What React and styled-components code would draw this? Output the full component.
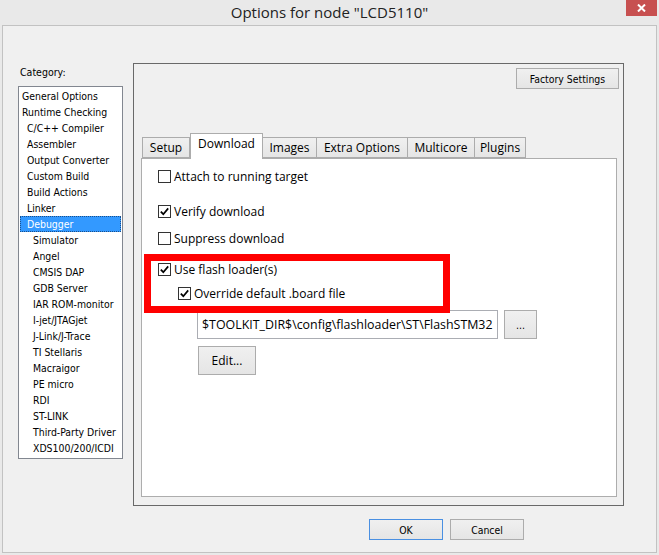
import React from 'react';
import styled, { createGlobalStyle } from 'styled-components';

const dlgFont = `'DejaVu Sans Condensed', 'DejaVu Sans', sans-serif`;
const uiFont = `'Open Sans', 'Noto Sans', sans-serif`;

const GlobalStyle = createGlobalStyle`
  html, body {
    margin: 0;
    padding: 0;
    background: #e9e9e9;
  }
  * {
    box-sizing: border-box;
  }
`;

const Window = styled.div`
  width: 659px;
  height: 555px;
  display: flex;
  flex-direction: column;
  padding: 0 2px 2px 2px;
  background: #e9e9e9;
`;

const TitleBar = styled.div`
  height: 25px;
  display: grid;
  grid-template-columns: 1fr auto 1fr;
  align-items: start;
`;

const Title = styled.div`
  grid-column: 2;
  font-family: ${uiFont};
  font-size: 15px;
  line-height: 24px;
  color: #222;
`;

const CloseButton = styled.div`
  grid-column: 3;
  justify-self: end;
  width: 31px;
  height: 16px;
  background: #c75050;
  display: flex;
  align-items: center;
  justify-content: center;
`;

const Client = styled.div`
  flex: 1;
  display: flex;
  flex-direction: column;
  border: 1px solid #c2c2c2;
  background: #f0f0f0;
  padding: 37px 0 0 15px;
`;

const MainRow = styled.div`
  display: flex;
  align-items: flex-start;
  gap: 10px;
`;

const LeftCol = styled.div`
  width: 105px;
  padding-top: 1px;
`;

const CategoryLabel = styled.div`
  font-family: ${dlgFont};
  font-size: 10.5px;
  line-height: 16px;
  margin: 0 0 6px 2px;
  color: #000;
`;

const ListBox = styled.div`
  width: 105px;
  background: #fff;
  border: 1px solid #828790;
  padding: 1px 1px 2px 1px;
`;

const ListItem = styled.div`
  height: 16px;
  line-height: 16px;
  font-family: ${dlgFont};
  font-size: 10.4px;
  white-space: nowrap;
  padding-left: ${(p) => [2, 7, 13][p.level]}px;
  color: ${(p) => (p.selected ? '#fff' : '#000')};
  background: ${(p) => (p.selected ? '#3399ff' : 'transparent')};
  outline: ${(p) => (p.selected ? '1px dotted #1c4f8a' : 'none')};
  outline-offset: -1px;
`;

const Frame = styled.div`
  width: 491px;
  height: 443px;
  border: 1px solid #696969;
  display: flex;
  flex-direction: column;
  padding: 4px 4px 8px 0;
`;

const Button = styled.div`
  width: ${(p) => p.w}px;
  height: ${(p) => p.h || 21}px;
  border: 1px solid ${(p) => (p.primary ? '#4a90e2' : '#acacac')};
  background: linear-gradient(#f0f0f0, #e5e5e5);
  display: flex;
  align-items: center;
  justify-content: center;
  font-family: ${(p) => (p.ui ? uiFont : dlgFont)};
  font-size: ${(p) => (p.ui ? '12px' : '10.4px')};
  color: #000;
`;

const TopRight = styled.div`
  display: flex;
  justify-content: flex-end;
`;

const TabStrip = styled.div`
  display: flex;
  align-items: flex-end;
  height: 25px;
  margin: 44px 0 0 8px;
`;

const Tab = styled.div`
  position: relative;
  width: ${(p) => p.w}px;
  height: ${(p) => (p.active ? 26 : 21)}px;
  margin-bottom: ${(p) => (p.active ? -1 : 0)}px;
  z-index: ${(p) => (p.active ? 1 : 0)};
  border: 1px solid #acacac;
  border-bottom: ${(p) => (p.active ? 'none' : '1px solid #acacac')};
  border-left-width: ${(p) => (p.first || p.active ? 1 : 0)}px;
  background: ${(p) => (p.active ? '#fff' : 'linear-gradient(#f0f0f0, #e5e5e5)')};
  display: flex;
  align-items: center;
  justify-content: center;
  padding-bottom: ${(p) => (p.active ? 6 : 0)}px;
  font-family: ${uiFont};
  font-size: 12px;
  color: #000;
`;

const Panel = styled.div`
  position: relative;
  flex: 1;
  margin-left: 7px;
  margin-right: 2px;
  background: #fff;
  border: 1px solid #adadad;
  padding: 9px 0 0 16px;
  display: flex;
  flex-direction: column;
`;

const CheckRow = styled.label`
  display: flex;
  align-items: center;
  gap: 3px;
  height: 16px;
  margin-top: ${(p) => p.top}px;
  margin-left: ${(p) => p.indent || 0}px;
  font-family: ${uiFont};
  font-size: 12px;
  color: #000;
`;

const Box = styled.span`
  width: 13px;
  height: 13px;
  border: 1px solid #333;
  background: #fff;
  display: flex;
  align-items: center;
  justify-content: center;
`;

const PathRow = styled.div`
  display: flex;
  gap: 6px;
  margin: 9px 0 0 39px;
`;

const PathField = styled.div`
  width: 301px;
  height: 29px;
  border: 1px solid #abadb3;
  background: #fff;
  padding-left: 4px;
  font-family: ${uiFont};
  font-size: 12.4px;
  line-height: 27px;
  white-space: nowrap;
  overflow: hidden;
  color: #000;
`;

const EditRow = styled.div`
  margin: 7px 0 0 40px;
`;

// red highlight drawn over the flash loader options
const Highlight = styled.div`
  position: absolute;
  left: 2px;
  top: 95px;
  width: 306px;
  height: 59px;
  border: 7px solid #ff0000;
  pointer-events: none;
`;

const ButtonRow = styled.div`
  display: flex;
  gap: 7px;
  margin: 13px 0 0 351px;
`;

const categories = [
  ['General Options', 0],
  ['Runtime Checking', 0],
  ['C/C++ Compiler', 1],
  ['Assembler', 1],
  ['Output Converter', 1],
  ['Custom Build', 1],
  ['Build Actions', 1],
  ['Linker', 1],
  ['Debugger', 1],
  ['Simulator', 2],
  ['Angel', 2],
  ['CMSIS DAP', 2],
  ['GDB Server', 2],
  ['IAR ROM-monitor', 2],
  ['I-jet/JTAGjet', 2],
  ['J-Link/J-Trace', 2],
  ['TI Stellaris', 2],
  ['Macraigor', 2],
  ['PE micro', 2],
  ['RDI', 2],
  ['ST-LINK', 2],
  ['Third-Party Driver', 2],
  ['XDS100/200/ICDI', 2],
];

const tabs = [
  ['Setup', 48],
  ['Download', 73],
  ['Images', 54],
  ['Extra Options', 91],
  ['Multicore', 67],
  ['Plugins', 51],
];

function Check({ checked }) {
  return (
    <Box>
      {checked && (
        <svg width="11" height="11" viewBox="0 0 11 11">
          <polyline points="1.8,5.6 4.3,8.2 9.2,2.4" fill="none" stroke="#000" strokeWidth="1.7" />
        </svg>
      )}
    </Box>
  );
}

function Option({ label, checked, top, indent }) {
  return (
    <CheckRow top={top} indent={indent}>
      <Check checked={checked} />
      {label}
    </CheckRow>
  );
}

export default function App() {
  return (
    <>
      <GlobalStyle />
      <Window>
        <TitleBar>
          <Title>Options for node "LCD5110"</Title>
          <CloseButton>
            <svg width="9" height="8" viewBox="0 0 9 8">
              <path d="M1 0.5 L8 7.5 M8 0.5 L1 7.5" stroke="#fff" strokeWidth="2" />
            </svg>
          </CloseButton>
        </TitleBar>
        <Client>
          <MainRow>
            <LeftCol>
              <CategoryLabel>Category:</CategoryLabel>
              <ListBox>
                {categories.map(([name, level]) => (
                  <ListItem key={name} level={level} selected={name === 'Debugger'}>
                    {name}
                  </ListItem>
                ))}
              </ListBox>
            </LeftCol>
            <Frame>
              <TopRight>
                <Button w={103}>Factory Settings</Button>
              </TopRight>
              <TabStrip>
                {tabs.map(([name, w], i) => (
                  <Tab key={name} w={w} first={i === 0} active={name === 'Download'}>
                    {name}
                  </Tab>
                ))}
              </TabStrip>
              <Panel>
                <Option label="Attach to running target" top={0} />
                <Option label="Verify download" checked top={19} />
                <Option label="Suppress download" top={11} />
                <Option label="Use flash loader(s)" checked top={15} />
                <Option label="Override default .board file" checked top={8} indent={20} />
                <PathRow>
                  <PathField>$TOOLKIT_DIR$\config\flashloader\ST\FlashSTM32</PathField>
                  <Button w={33} h={29}>...</Button>
                </PathRow>
                <EditRow>
                  <Button w={58} h={29} ui>Edit...</Button>
                </EditRow>
                <Highlight />
              </Panel>
            </Frame>
          </MainRow>
          <ButtonRow>
            <Button w={74} primary>OK</Button>
            <Button w={74}>Cancel</Button>
          </ButtonRow>
        </Client>
      </Window>
    </>
  );
}
